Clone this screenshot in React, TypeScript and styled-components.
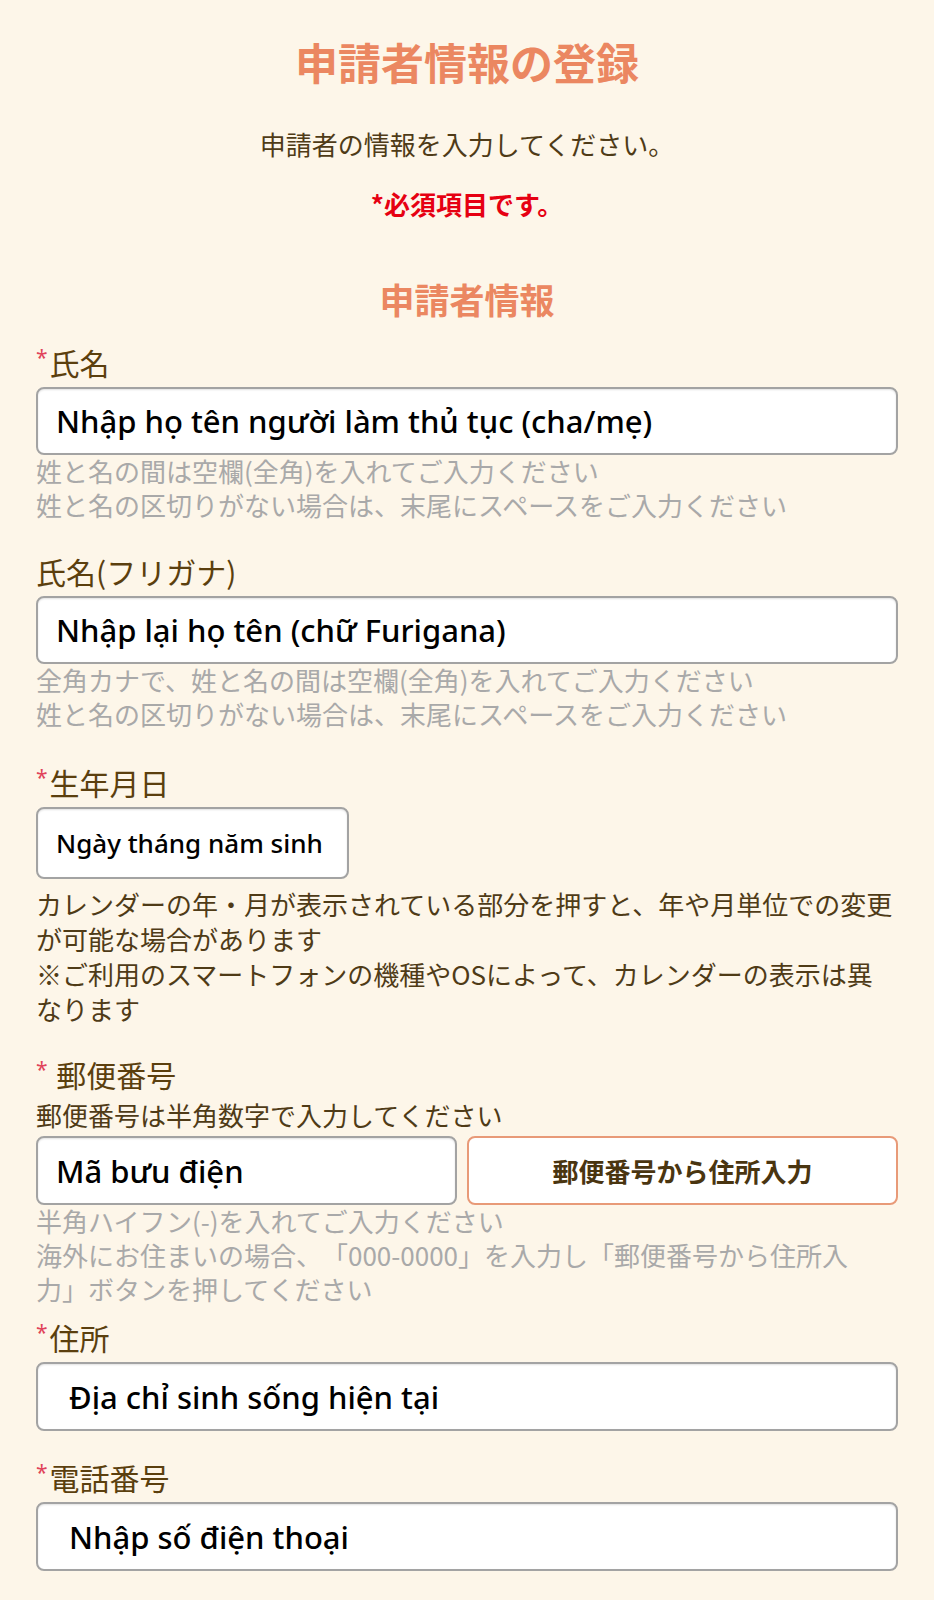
import React from "react";
import styled, { createGlobalStyle } from "styled-components";

const GlobalStyle = createGlobalStyle`
  html, body {
    margin: 0;
    padding: 0;
    background: #fdf6e9;
  }
  body {
    font-family: "Noto Sans CJK JP", "Noto Sans", sans-serif;
    text-spacing-trim: space-all;
  }
`;

const Page = styled.div`
  min-height: 1600px;
  background: #fdf6e9;
  padding: 31px 36px 40px;
  box-sizing: border-box;
`;

const Title = styled.h1`
  margin: 0;
  text-align: center;
  font-size: 43px;
  line-height: 60px;
  font-weight: 700;
  color: #eb8761;
`;

const Lead = styled.p`
  margin: 35px 0 0;
  text-align: center;
  font-size: 26px;
  line-height: 35px;
  color: #4f3b17;
`;

const Required = styled.p`
  margin: 25px 0 0;
  text-align: center;
  font-size: 26px;
  line-height: 35px;
  font-weight: 700;
  color: #e60012;
`;

const SectionTitle = styled.h2`
  margin: 55px 0 0;
  text-align: center;
  font-size: 35px;
  line-height: 46px;
  font-weight: 700;
  color: #eb8761;
`;

const Field = styled.div<{ $top: number }>`
  margin-top: ${(p) => p.$top}px;
  display: flex;
  flex-direction: column;
`;

const Label = styled.label<{ $below?: number }>`
  font-size: 30px;
  line-height: 38px;
  color: #5b3f0e;
  margin-bottom: ${(p) => p.$below ?? 6}px;
`;

const Star = styled.span`
  display: inline-block;
  vertical-align: top;
  padding-top: 4px;
  font-family: "Noto Sans", sans-serif;
  font-size: 21px;
  line-height: 21px;
  margin-right: 2px;
  color: #e0435a;
`;

const Box = styled.div<{ $pad?: number; $h?: number; $small?: boolean }>`
  box-sizing: border-box;
  height: ${(p) => p.$h ?? 68}px;
  display: flex;
  align-items: center;
  padding-left: ${(p) => p.$pad ?? 18}px;
  background: #fff;
  border: 2px solid #a3a3a3;
  border-radius: 8px;
  box-shadow: inset 0 1px 2px rgba(0, 0, 0, 0.12);
  font-family: "Noto Sans", "Noto Sans CJK JP", sans-serif;
  font-weight: 500;
  font-size: ${(p) => (p.$small ? 26 : 31)}px;
  color: #000;
  white-space: nowrap;
`;

const DateBox = styled(Box)`
  width: 313px;
`;

const Help = styled.div`
  margin-top: -1px;
  font-size: 26px;
  line-height: 34px;
  color: #a9a9a9;
`;

const Note = styled.div<{ $top?: number }>`
  margin-top: ${(p) => p.$top ?? 0}px;
  font-size: 26px;
  line-height: 35px;
  color: #4f3b17;
`;

const PostalRow = styled.div`
  display: grid;
  grid-template-columns: 421px 1fr;
  gap: 10px;
  margin-top: 4px;
`;

const LookupButton = styled.button`
  box-sizing: border-box;
  height: 69px;
  background: #fff;
  border: 2px solid #e89a78;
  border-radius: 8px;
  font-family: "Noto Sans CJK JP", sans-serif;
  font-size: 26px;
  font-weight: 700;
  color: #4a3510;
  cursor: pointer;
`;

export default function App() {
  return (
    <Page>
      <GlobalStyle />
      <Title>申請者情報の登録</Title>
      <Lead>申請者の情報を入力してください。</Lead>
      <Required>*必須項目です。</Required>
      <SectionTitle>申請者情報</SectionTitle>

      <Field $top={21}>
        <Label>
          <Star>*</Star>氏名
        </Label>
        <Box>Nhập họ tên người làm thủ tục (cha/mẹ)</Box>
        <Help>
          姓と名の間は空欄(全角)を入れてご入力ください
          <br />
          姓と名の区切りがない場合は、末尾にスペースをご入力ください
        </Help>
      </Field>

      <Field $top={30}>
        <Label>氏名(フリガナ)</Label>
        <Box>Nhập lại họ tên (chữ Furigana)</Box>
        <Help>
          全角カナで、姓と名の間は空欄(全角)を入れてご入力ください
          <br />
          姓と名の区切りがない場合は、末尾にスペースをご入力ください
        </Help>
      </Field>

      <Field $top={32}>
        <Label>
          <Star>*</Star>生年月日
        </Label>
        <DateBox $h={72} $small>
          Ngày tháng năm sinh
        </DateBox>
        <Note $top={7}>
          カレンダーの年・月が表示されている部分を押すと、年や月単位での変更が可能な場合があります
        </Note>
        <Note>※ご利用のスマートフォンの機種やOSによって、カレンダーの表示は異なります</Note>
      </Field>

      <Field $top={29}>
        <Label $below={4}>
          <Star>*</Star> 郵便番号
        </Label>
        <Note>郵便番号は半角数字で入力してください</Note>
        <PostalRow>
          <Box $h={69}>Mã bưu điện</Box>
          <LookupButton type="button">郵便番号から住所入力</LookupButton>
        </PostalRow>
        <Help>
          半角ハイフン(-)を入れてご入力ください
          <br />
          海外にお住まいの場合、「000-0000」を入力し「郵便番号から住所入
          <br />
          力」ボタンを押してください
        </Help>
      </Field>

      <Field $top={12}>
        <Label>
          <Star>*</Star>住所
        </Label>
        <Box $pad={31} $h={69}>
          Địa chỉ sinh sống hiện tại
        </Box>
      </Field>

      <Field $top={27}>
        <Label>
          <Star>*</Star>電話番号
        </Label>
        <Box $pad={31} $h={69}>
          Nhập số điện thoại
        </Box>
      </Field>
    </Page>
  );
}
